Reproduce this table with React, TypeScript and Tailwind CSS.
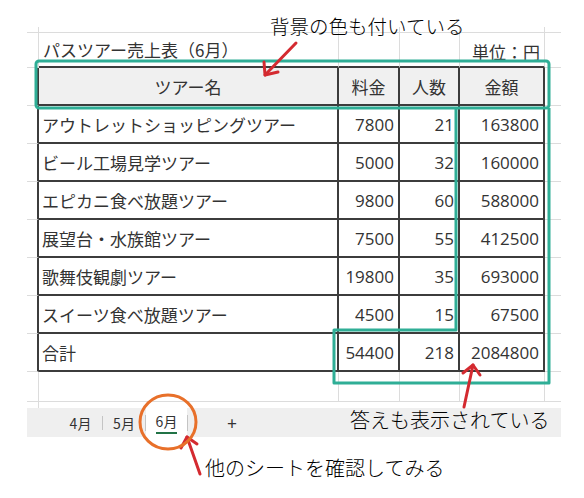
const rows: [string, number, number, number][] = [
  ['アウトレットショッピングツアー', 7800, 21, 163800],
  ['ビール工場見学ツアー', 5000, 32, 160000],
  ['エピカニ食べ放題ツアー', 9800, 60, 588000],
  ['展望台・水族館ツアー', 7500, 55, 412500],
  ['歌舞伎観劇ツアー', 19800, 35, 693000],
  ['スイーツ食べ放題ツアー', 4500, 15, 67500],
];

const light = 'border-[#dcdcdc]';

function GridRow({ height, cells }: { height: string; cells: React.ReactNode }) {
  return <div className={`flex ${height}`}>{cells}</div>;
}

function PlainRow({ height }: { height: string }) {
  return (
    <GridRow
      height={height}
      cells={
        <>
          <div className={`w-[12px] border-r border-b ${light}`} />
          <div className={`w-[300px] border-r border-b ${light}`} />
          <div className={`w-[61px] border-r border-b ${light}`} />
          <div className={`w-[60px] border-r border-b ${light}`} />
          <div className={`w-[85px] border-r border-b ${light}`} />
          <div className={`w-[16px] border-b ${light}`} />
        </>
      }
    />
  );
}

function DataRow({ name, fee, people, amount }: { name: string; fee: number; people: number; amount: number }) {
  const cell =
    "flex items-center justify-end pr-[4px] pt-[1px] border-r-2 border-b-2 border-[#3c3c3c] font-['Open_Sans',sans-serif] text-[17px]";
  return (
    <GridRow
      height="h-[38px]"
      cells={
        <>
          <div className={`w-[12px] border-b ${light} border-r-2 border-r-[#3c3c3c]`} />
          <div className="w-[300px] flex items-center pl-[3px] border-r-2 border-b-2 border-[#3c3c3c] whitespace-nowrap overflow-hidden">
            {name}
          </div>
          <div className={`w-[61px] ${cell}`}>{fee}</div>
          <div className={`w-[60px] ${cell}`}>{people}</div>
          <div className={`w-[85px] ${cell}`}>{amount}</div>
          <div className={`w-[16px] border-b ${light}`} />
        </>
      }
    />
  );
}

export default function App() {
  const headCell = 'flex items-center justify-center bg-[#f0f0f0] border-r-2 border-b-2 border-[#3c3c3c]';
  return (
    <div className="relative w-[584px] h-[498px] bg-white overflow-hidden font-['Noto_Sans_CJK_JP',sans-serif] text-[#333]">
      <div className="pt-[27px] pl-[27px] text-[17px] leading-none">
        <PlainRow height="h-[6px]" />

        {/* title row */}
        <GridRow
          height="h-[35px]"
          cells={
            <>
              <div className={`w-[12px] border-r border-b ${light}`} />
              <div className={`w-[300px] flex items-center pl-[4px] border-r ${light} border-b-2 border-b-[#3c3c3c] whitespace-nowrap`}>
                パスツアー売上表（6月）
              </div>
              <div className={`w-[61px] border-r ${light} border-b-2 border-b-[#3c3c3c]`} />
              <div className={`w-[60px] border-r ${light} border-b-2 border-b-[#3c3c3c]`} />
              <div className={`w-[85px] flex items-center justify-end pr-[4px] pt-[3px] border-r ${light} border-b-2 border-b-[#3c3c3c]`}>
                単位：円
              </div>
              <div className={`w-[16px] border-b ${light}`} />
            </>
          }
        />

        {/* header row */}
        <GridRow
          height="h-[38px]"
          cells={
            <>
              <div className={`w-[12px] border-b ${light} border-r-2 border-r-[#3c3c3c]`} />
              <div className={`w-[300px] ${headCell}`}>ツアー名</div>
              <div className={`w-[61px] ${headCell}`}>料金</div>
              <div className={`w-[60px] ${headCell}`}>人数</div>
              <div className={`w-[85px] ${headCell}`}>金額</div>
              <div className={`w-[16px] border-b ${light}`} />
            </>
          }
        />

        {rows.map(([name, fee, people, amount]) => (
          <DataRow key={name} name={name} fee={fee} people={people} amount={amount} />
        ))}
        <DataRow name="合計" fee={54400} people={218} amount={2084800} />

        <PlainRow height="h-[30px]" />
        <div className="flex h-[6px]">
          <div className={`w-[12px] border-r ${light}`} />
        </div>

        {/* sheet tabs */}
        <div className="flex items-center w-[534px] h-[29px] bg-[#efefef] text-[14px]">
          <div className="w-[32px]" />
          <div className="w-[43px] text-center">4月</div>
          <div className="w-px h-[14px] bg-[#c4c4c4]" />
          <div className="w-[42px] text-center">5月</div>
          <div className="w-px h-[16px] bg-[#c4c4c4]" />
          <div className="w-[41px] h-full bg-white flex flex-col items-center justify-center pt-[2px]">
            <span>6月</span>
            <span className="mt-[4px] w-[21px] h-[2px] bg-[#217346]" />
          </div>
          <div className="w-px h-[16px] bg-[#c4c4c4]" />
          <div className="w-[88px] text-center text-[17px]">+</div>
        </div>
      </div>

      {/* annotations */}
      <div className="absolute left-[270px] top-[16px] text-[19.5px] font-light leading-none text-black whitespace-nowrap">
        背景の色も付いている
      </div>
      <div className="absolute left-[350px] top-[410px] text-[20px] font-light leading-none text-black whitespace-nowrap">
        答えも表示されている
      </div>
      <div className="absolute left-[205px] top-[458px] text-[20px] font-light leading-none text-black whitespace-nowrap">
        他のシートを確認してみる
      </div>

      <svg className="absolute left-0 top-0 pointer-events-none" width="584" height="498" viewBox="0 0 584 498">
        <g fill="none" stroke="#2fae96" strokeWidth="3" strokeLinejoin="round">
          <rect x="36" y="61" width="513" height="47" rx="3" />
          <path d="M456 108 L456 330 L334 330 L334 383 L549 383 L549 108" />
        </g>
        <g fill="none" stroke="#d42a30" strokeWidth="3" strokeLinecap="round" strokeLinejoin="round">
          <path d="M296 43 L265 75" />
          <path d="M264 62 L265 75 L278 72" />
          <path d="M200 474 L187 437" />
          <path d="M181 448 L187 437 L197 444" />
          <path d="M464 407 L473 365" />
          <path d="M463 373 L473 365 L480 375" />
        </g>
        <ellipse cx="168" cy="422" rx="28" ry="27" fill="none" stroke="#e8702a" strokeWidth="3" />
      </svg>
    </div>
  );
}
